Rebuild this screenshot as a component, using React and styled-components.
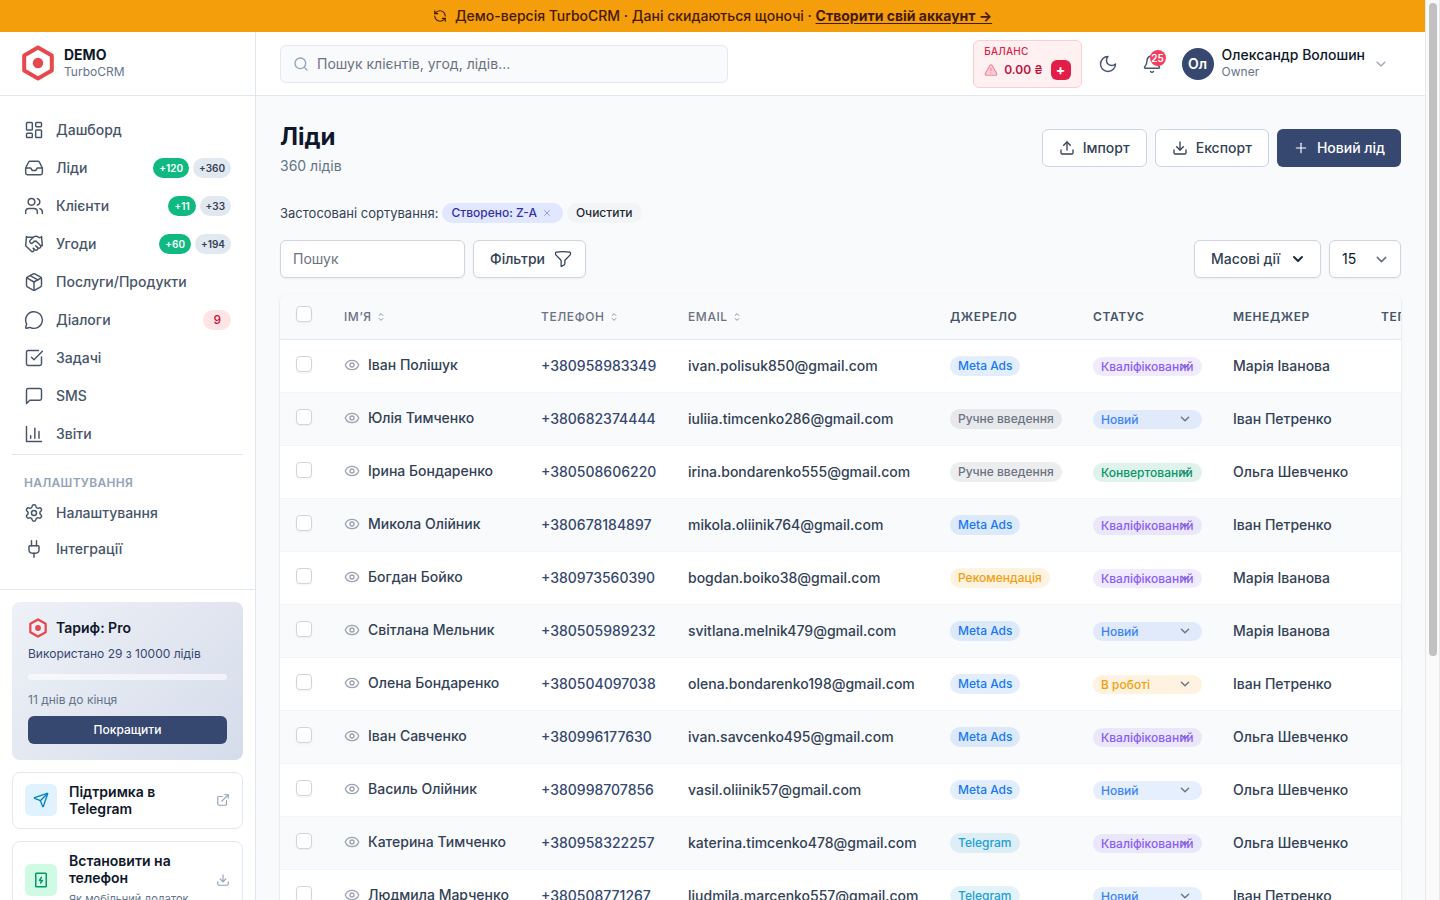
import React from 'react';
import styled, { createGlobalStyle } from 'styled-components';
import {
  LayoutDashboard,
  Inbox,
  Users,
  Handshake,
  Package,
  MessageCircle,
  SquareCheckBig,
  Settings,
  Plug,
  RefreshCcw,
  Search,
  TriangleAlert,
  Bell,
  ChevronDown,
  Upload,
  Download,
  Plus,
  Eye,
  Send,
  ExternalLink,
  X,
} from 'lucide-react';

const brand = '#364770';

const GlobalStyle = createGlobalStyle`
  *, *::before, *::after {
    box-sizing: border-box;
  }

  html {
    scrollbar-width: none;
  }

  body {
    margin: 0;
    background: #f8fafc;
    color: #0f172a;
    font-family: Inter, "Liberation Sans", sans-serif;
    font-size: 14px;
    line-height: 20px;
    -webkit-font-smoothing: antialiased;
  }

  button, input, select {
    font: inherit;
    color: inherit;
    margin: 0;
  }

  button {
    cursor: pointer;
  }

  a {
    color: inherit;
    text-decoration: none;
  }

  svg {
    flex-shrink: 0;
  }
`;

/* ---------- Page frame and scroll rail ---------- */

const Frame = styled.div`
  display: grid;
  grid-template-columns: minmax(0, 1fr) 15px;
`;

const Rail = styled.div`
  position: sticky;
  top: 0;
  align-self: start;
  height: 100vh;
  padding: 3px;
  border: solid #e8e8e8;
  border-width: 0 1px;
  background: #fafafa;
`;

const Thumb = styled.div`
  width: 8px;
  height: 73%;
  border-radius: 4px;
  background: #c1c1c1;
`;

/* ---------- Banner ---------- */

const Banner = styled.div`
  display: flex;
  align-items: center;
  justify-content: center;
  gap: 8px;
  height: 32px;
  background: #f59e0b;
  color: #451a03;
  font-weight: 500;

  a {
    font-weight: 700;
    text-decoration: underline;
    text-underline-offset: 2px;
  }
`;

/* ---------- Shell ---------- */

const Shell = styled.div`
  display: grid;
  grid-template-columns: 256px minmax(0, 1fr);
`;

const Sidebar = styled.aside`
  position: sticky;
  top: 0;
  align-self: start;
  height: calc(100vh - 32px);
  min-height: 320px;
  overflow: hidden;
  background: #fff;
  border-right: 1px solid #e2e8f0;
`;

const Brand = styled.a`
  display: flex;
  align-items: center;
  gap: 8px;
  height: 64px;
  padding: 0 20px 1px;
  border-bottom: 1px solid #e2e8f0;
`;

const BrandText = styled.span`
  display: flex;
  flex-direction: column;
  line-height: 18px;

  strong {
    font-weight: 700;
  }

  small {
    font-size: 12px;
    line-height: 16px;
    color: #64748b;
  }
`;

const Nav = styled.nav`
  display: flex;
  flex-direction: column;
  gap: ${(props) => (props.$compact ? '0' : '2px')};
  padding: ${(props) => (props.$compact ? '20px 0 0' : '16px 12px 22px')};
  border-top: ${(props) => (props.$compact ? '1px solid #e2e8f0' : '0')};
`;

const NavTitle = styled.h2`
  margin: 0 0 4px;
  padding: 0 12px;
  font-size: 12px;
  font-weight: 600;
  line-height: 16px;
  letter-spacing: 0.025em;
  text-transform: uppercase;
  color: #94a3b8;
`;

const NavItem = styled.a`
  display: flex;
  align-items: center;
  gap: 12px;
  height: 36px;
  padding: 0 12px;
  border-radius: 6px;
  font-weight: 500;
  color: #475569;

  &:hover {
    background: #f1f5f9;
  }
`;

const Badges = styled.span`
  display: flex;
  gap: 4px;
  margin-left: auto;
`;

const badgeTones = {
  green: ['#10b981', '#fff'],
  gray: ['#e2e8f0', '#334155'],
  red: ['#ffe4e6', '#be123c'],
};

const Badge = styled.span`
  padding: ${(props) => (props.$tone === 'red' ? '0 10px' : '0 6px')};
  border-radius: 10px;
  background: ${(props) => badgeTones[props.$tone][0]};
  color: ${(props) => badgeTones[props.$tone][1]};
  font-size: ${(props) => (props.$tone === 'red' ? '12px' : '10px')};
  font-weight: ${(props) => (props.$tone === 'red' ? 500 : 600)};
  line-height: 20px;
`;

const SidebarFooter = styled.div`
  display: flex;
  flex-direction: column;
  gap: 12px;
  padding: 12px;
  border-top: 1px solid #e2e8f0;
`;

const Plan = styled.section`
  padding: 16px;
  border-radius: 8px;
  background: linear-gradient(135deg, #eef1f7, #d5dcea);
  font-size: 12px;
  line-height: 16px;
  color: ${brand};

  p {
    margin: 8px 0 12px;
  }
`;

const PlanTitle = styled.h3`
  display: flex;
  align-items: center;
  gap: 8px;
  margin: 0;
  font-size: 14px;
  font-weight: 600;
  line-height: 20px;
  color: #0f172a;
`;

const PlanBar = styled.div`
  height: 6px;
  margin-bottom: 12px;
  border-radius: 3px;
  background: rgba(255, 255, 255, 0.6);
`;

const PlanNote = styled.div`
  color: #64748b;
`;

const PlanButton = styled.button`
  display: block;
  width: 100%;
  height: 28px;
  margin-top: 8px;
  padding: 0;
  border: 0;
  border-radius: 6px;
  background: ${brand};
  color: #fff;
  font-weight: 500;
`;

const LinkCard = styled.a`
  display: flex;
  align-items: center;
  gap: 12px;
  padding: 10px 12px 11px;
  border: 1px solid #e2e8f0;
  border-radius: 8px;
  color: #94a3b8;
`;

const LinkIcon = styled.span`
  display: flex;
  align-items: center;
  justify-content: center;
  flex-shrink: 0;
  width: 32px;
  height: 32px;
  border-radius: 6px;
  background: ${(props) => props.$bg};
  color: ${(props) => props.$color};
`;

const LinkText = styled.span`
  flex: 1;
  display: flex;
  flex-direction: column;
  gap: 5px;
  font-weight: 600;
  line-height: 17px;
  color: #0f172a;

  small {
    font-size: 11px;
    font-weight: 400;
    line-height: 16px;
    color: #64748b;
    white-space: nowrap;
  }
`;

/* ---------- Top bar ---------- */

const TopBar = styled.header`
  display: flex;
  align-items: center;
  height: 64px;
  padding: 0 24px;
  background: #fff;
  border-bottom: 1px solid #e2e8f0;
`;

const GlobalSearch = styled.label`
  display: flex;
  align-items: center;
  gap: 8px;
  flex: 0 1 448px;
  height: 38px;
  padding: 0 12px;
  border: 1px solid #e2e8f0;
  border-radius: 6px;
  background: #f8fafc;
  color: #94a3b8;

  input {
    flex: 1;
    min-width: 0;
    padding: 0;
    border: 0;
    outline: 0;
    background: none;
    color: #0f172a;
  }

  input::placeholder {
    color: #6b7280;
    opacity: 1;
  }
`;

const TopActions = styled.div`
  display: flex;
  align-items: center;
  gap: 8px;
  margin-left: auto;
`;

const Balance = styled.div`
  height: 48px;
  padding: 4px 10px;
  border: 1px solid #fecdd3;
  border-radius: 6px;
  background: #fff1f2;
  color: #e11d48;
  font-size: 10px;
  font-weight: 500;
  line-height: 12px;
  letter-spacing: 0.025em;
`;

const BalanceRow = styled.div`
  display: flex;
  align-items: center;
  gap: 6px;
  height: 27px;
  font-size: 12px;
  letter-spacing: normal;
  color: #be123c;

  svg {
    fill: #fecdd3;
    color: #f08a9f;
  }

  strong {
    margin-right: 2px;
    font-weight: 600;
  }
`;

const TopUp = styled.button`
  width: 20px;
  height: 20px;
  padding: 0;
  border: 0;
  border-radius: 6px;
  background: #e11d48;
  color: #fff;
  font-size: 14px;
  font-weight: 700;
  line-height: 20px;
`;

const IconButton = styled.button`
  position: relative;
  display: flex;
  align-items: center;
  justify-content: center;
  width: 36px;
  height: 36px;
  padding: 0;
  border: 0;
  border-radius: 6px;
  background: none;
  color: #475569;
`;

const Count = styled.span`
  position: absolute;
  top: 4px;
  right: 4px;
  min-width: 16px;
  height: 16px;
  border-radius: 8px;
  background: #f43f5e;
  color: #fff;
  font-size: 10px;
  font-weight: 600;
  line-height: 16px;
  text-align: center;
`;

const UserButton = styled.button`
  display: flex;
  align-items: center;
  gap: 8px;
  padding: 4px 12px 4px 4px;
  border: 0;
  background: none;
  color: #94a3b8;
  text-align: left;
`;

const Avatar = styled.span`
  width: 32px;
  height: 32px;
  border-radius: 50%;
  background: ${brand};
  color: #fff;
  font-weight: 600;
  line-height: 32px;
  text-align: center;
`;

const UserText = styled.span`
  display: flex;
  flex-direction: column;
  padding-bottom: 2px;
  font-weight: 500;
  line-height: 18px;
  color: #0f172a;

  small {
    font-size: 12px;
    font-weight: 400;
    line-height: 16px;
    color: #64748b;
  }
`;

/* ---------- Page ---------- */

const Content = styled.main`
  padding: 24px;
`;

const PageHead = styled.div`
  display: flex;
  align-items: center;
  justify-content: space-between;
  margin-bottom: 27px;

  h1 {
    margin: 0 0 2px;
    font-size: 24px;
    font-weight: 700;
    line-height: 34px;
  }

  p {
    margin: 0;
    color: #64748b;
  }
`;

const Group = styled.div`
  display: flex;
  gap: 8px;
`;

const Button = styled.button`
  display: flex;
  align-items: center;
  gap: 8px;
  height: 38px;
  padding: ${(props) => (props.$toolbar ? '0 12px 0 16px' : '0 16px')};
  border: ${(props) => (props.$primary ? '0' : props.$toolbar ? '1px solid #d1d5db' : '1px solid #cbd5e1')};
  border-radius: 6px;
  background: ${(props) => (props.$primary ? brand : '#fff')};
  color: ${(props) => (props.$primary ? '#fff' : '#334155')};
  font-weight: 500;
  box-shadow: ${(props) => (props.$toolbar ? '0 1px 2px rgba(0, 0, 0, 0.05)' : 'none')};
`;

const SortRow = styled.div`
  display: flex;
  align-items: center;
  gap: 4px;
  margin-bottom: 17px;
  font-size: 13px;
  color: #334155;
`;

const Pill = styled.span`
  display: flex;
  align-items: center;
  gap: 3px;
  height: 20px;
  padding: 0 9px;
  border: 0;
  border-radius: 10px;
  background: ${(props) => (props.$indigo ? '#e0e7ff' : '#f3f4f6')};
  color: ${(props) => (props.$indigo ? '#3730a3' : '#1f2937')};
  font-size: 12px;
  font-weight: 500;
  line-height: 16px;
`;

const PillRemove = styled.button`
  display: flex;
  padding: 2px;
  border: 0;
  background: none;
  color: #818cf8;
`;

const Toolbar = styled.div`
  display: flex;
  justify-content: space-between;
  margin-bottom: 16px;
`;

const SearchInput = styled.input`
  width: 185px;
  height: 38px;
  padding: 0 12px 1px;
  border: 1px solid #d1d5db;
  border-radius: 6px;
  background: #fff;
  box-shadow: 0 1px 2px rgba(0, 0, 0, 0.05);

  &::placeholder {
    color: #6b7280;
    opacity: 1;
  }
`;

const arrow =
  "url(\"data:image/svg+xml,%3csvg xmlns='http://www.w3.org/2000/svg' fill='none' viewBox='0 0 20 20'%3e%3cpath stroke='%236b7280' stroke-linecap='round' stroke-linejoin='round' stroke-width='1.5' d='M6 8l4 4 4-4'/%3e%3c/svg%3e\")";

const PageSize = styled.select`
  appearance: none;
  width: 72px;
  height: 38px;
  padding: 0 12px;
  border: 1px solid #d1d5db;
  border-radius: 6px;
  background: #fff ${arrow} right 8px center / 21px no-repeat;
  box-shadow: 0 1px 2px rgba(0, 0, 0, 0.05);
`;

const TableBox = styled.div`
  overflow: hidden;
  border-radius: 8px;
  background: #fff;
  box-shadow: 0 1px 3px rgba(0, 0, 0, 0.1), 0 1px 2px rgba(0, 0, 0, 0.06);
`;

const Table = styled.table`
  table-layout: fixed;
  width: 1280px;
  border-collapse: separate;
  border-spacing: 0;
  font-weight: 500;
  color: #334155;
  white-space: nowrap;

  th,
  td {
    padding: 0 16px;
    text-align: left;
  }

  th {
    height: 46px;
    border-bottom: 1px solid #e2e8f0;
    background: #f8fafc;
    font-size: 12px;
    font-weight: 600;
    line-height: 16px;
    letter-spacing: 0.05em;
    text-transform: uppercase;
    color: #475569;
  }

  td {
    height: 53px;
    border-bottom: 1px solid #f1f5f9;
  }

  tbody tr:nth-child(even) {
    background: #f8fafc;
  }
`;

const Col = styled.col`
  width: ${(props) => props.$w}px;
`;

const SortButton = styled.button`
  display: flex;
  align-items: center;
  gap: 3px;
  padding: 0;
  border: 0;
  background: none;
  color: #6b7280;
  font-weight: 500;
  letter-spacing: inherit;
  text-transform: inherit;
`;

const Check = styled.input`
  appearance: none;
  display: block;
  width: 16px;
  height: 16px;
  margin-bottom: 5px;
  border: 1px solid #d1d5db;
  border-radius: 4px;
  background: #fff;
  box-shadow: 0 1px 2px rgba(0, 0, 0, 0.05);

  &:checked {
    background: ${brand};
  }
`;

const Person = styled.a`
  display: flex;
  align-items: center;
  gap: 8px;
  padding-bottom: 2px;

  svg {
    color: #9ca3af;
  }
`;

const Phone = styled.a`
  color: ${brand};
`;

const Source = styled.span`
  display: block;
  width: fit-content;
  padding: 0 8px;
  border-radius: 10px;
  background: ${(props) => props.$color}20;
  color: ${(props) => props.$color};
  font-size: 12px;
  line-height: 20px;
`;

const Status = styled.select`
  appearance: none;
  display: block;
  height: 19px;
  padding: 0 8px;
  border: 0;
  border-radius: 10px;
  background: ${(props) => props.$color}20 ${arrow} right 8px center / 18px no-repeat;
  color: ${(props) => props.$color};
  font-size: 12px;
`;

const Pager = styled.div`
  display: flex;
  justify-content: space-between;
  align-items: center;
  padding-top: 16px;
  height: 54px;
  color: #334155;
`;

/* ---------- Icons ---------- */

const Line = ({ size = 20, width = 1.75, children }) => (
  <svg
    width={size}
    height={size}
    viewBox="0 0 24 24"
    fill="none"
    stroke="currentColor"
    strokeWidth={width}
    strokeLinecap="round"
    strokeLinejoin="round"
    aria-hidden="true"
  >
    {children}
  </svg>
);

const Logo = ({ size, stroke = 4 }) => (
  <svg width={size} height={size} viewBox="0 0 36 36" fill="none" aria-hidden="true">
    <path
      d="M18 2.6 31.8 10.4V25.6L18 33.4 4.2 25.6V10.4Z"
      stroke="#e5484d"
      strokeWidth={stroke}
      strokeLinejoin="round"
    />
    <circle cx="18" cy="18" r="5.2" fill="#e5484d" />
  </svg>
);

const SmsIcon = () => (
  <Line>
    <path d="M21 15a2 2 0 0 1-2 2H7l-4 4V5a2 2 0 0 1 2-2h14a2 2 0 0 1 2 2z" />
  </Line>
);

const ReportIcon = () => (
  <Line>
    <path d="M3 3v18h18M18 17V9M13 17V5M8 17v-3" />
  </Line>
);

const MoonIcon = () => (
  <Line>
    <path d="M12 3a6 6 0 0 0 9 9 9 9 0 1 1-9-9Z" />
  </Line>
);

const FunnelIcon = () => (
  <Line width={1.5}>
    <path d="M12 3c2.755 0 5.455.232 8.083.678.533.09.917.556.917 1.096v1.044a2.25 2.25 0 0 1-.659 1.591l-5.432 5.432a2.25 2.25 0 0 0-.659 1.591v2.927a2.25 2.25 0 0 1-1.244 2.013L9.75 21v-6.568a2.25 2.25 0 0 0-.659-1.591L3.659 7.409A2.25 2.25 0 0 1 3 5.818V4.774c0-.54.384-1.006.917-1.096A48.32 48.32 0 0 1 12 3Z" />
  </Line>
);

const SortIcon = () => (
  <Line size={12} width={1.5}>
    <path d="M8.25 15 12 18.75 15.75 15m-7.5-6L12 5.25 15.75 9" />
  </Line>
);

const CaretIcon = () => (
  <svg width="20" height="20" viewBox="0 0 20 20" fill="#1e293b" aria-hidden="true">
    <path d="M5.293 7.293a1 1 0 0 1 1.414 0L10 10.586l3.293-3.293a1 1 0 1 1 1.414 1.414l-4 4a1 1 0 0 1-1.414 0l-4-4a1 1 0 0 1 0-1.414z" />
  </svg>
);

const InstallIcon = () => (
  <Line size={18} width={2}>
    <rect x="5" y="3" width="14" height="18" rx="1" />
    <path d="M12.5 8.5 10 12.5h4L11.5 16" />
  </Line>
);

/* ---------- Data ---------- */

const menu = [
  { icon: LayoutDashboard, label: 'Дашборд' },
  { icon: Inbox, label: 'Ліди', badges: [['green', '+120'], ['gray', '+360']] },
  { icon: Users, label: 'Клієнти', badges: [['green', '+11'], ['gray', '+33']] },
  { icon: Handshake, label: 'Угоди', badges: [['green', '+60'], ['gray', '+194']] },
  { icon: Package, label: 'Послуги/Продукти' },
  { icon: MessageCircle, label: 'Діалоги', badges: [['red', '9']] },
  { icon: SquareCheckBig, label: 'Задачі' },
  { icon: SmsIcon, label: 'SMS' },
  { icon: ReportIcon, label: 'Звіти' },
];

const settingsMenu = [
  { icon: Settings, label: 'Налаштування' },
  { icon: Plug, label: 'Інтеграції' },
];

const sourceColors = {
  'Meta Ads': '#1877f2',
  'Ручне введення': '#6b7280',
  'Рекомендація': '#f59e0b',
  Telegram: '#229ed9',
};

const statusColors = {
  'Новий': '#3b82f6',
  'В роботі': '#f59e0b',
  'Кваліфікований': '#8b5cf6',
  'Конвертований': '#059669',
};

const leads = [
  ['Іван Полішук', '+380958983349', 'ivan.polisuk850@gmail.com', 'Meta Ads', 'Кваліфікований', 'Марія Іванова'],
  ['Юлія Тимченко', '+380682374444', 'iuliia.timcenko286@gmail.com', 'Ручне введення', 'Новий', 'Іван Петренко'],
  ['Ірина Бондаренко', '+380508606220', 'irina.bondarenko555@gmail.com', 'Ручне введення', 'Конвертований', 'Ольга Шевченко'],
  ['Микола Олійник', '+380678184897', 'mikola.oliinik764@gmail.com', 'Meta Ads', 'Кваліфікований', 'Іван Петренко'],
  ['Богдан Бойко', '+380973560390', 'bogdan.boiko38@gmail.com', 'Рекомендація', 'Кваліфікований', 'Марія Іванова'],
  ['Світлана Мельник', '+380505989232', 'svitlana.melnik479@gmail.com', 'Meta Ads', 'Новий', 'Марія Іванова'],
  ['Олена Бондаренко', '+380504097038', 'olena.bondarenko198@gmail.com', 'Meta Ads', 'В роботі', 'Іван Петренко'],
  ['Іван Савченко', '+380996177630', 'ivan.savcenko495@gmail.com', 'Meta Ads', 'Кваліфікований', 'Ольга Шевченко'],
  ['Василь Олійник', '+380998707856', 'vasil.oliinik57@gmail.com', 'Meta Ads', 'Новий', 'Ольга Шевченко'],
  ['Катерина Тимченко', '+380958322257', 'katerina.timcenko478@gmail.com', 'Telegram', 'Кваліфікований', 'Ольга Шевченко'],
  ['Людмила Марченко', '+380508771267', 'liudmila.marcenko557@gmail.com', 'Telegram', 'Новий', 'Іван Петренко'],
];

const MenuItem = ({ icon: Icon, label, badges }) => (
  <NavItem href="#">
    <Icon size={20} strokeWidth={1.75} />
    {label}
    {badges && (
      <Badges>
        {badges.map(([tone, text]) => (
          <Badge key={text} $tone={tone}>{text}</Badge>
        ))}
      </Badges>
    )}
  </NavItem>
);

const SortableTh = ({ children }) => (
  <th>
    <SortButton type="button">
      {children}
      <SortIcon />
    </SortButton>
  </th>
);

const LeadRow = ({ lead }) => {
  const [name, phone, email, source, status, manager] = lead;
  return (
    <tr>
      <td>
        <Check type="checkbox" aria-label={name} />
      </td>
      <td>
        <Person href="#">
          <Eye size={16} />
          {name}
        </Person>
      </td>
      <td>
        <Phone href={`tel:${phone}`}>{phone}</Phone>
      </td>
      <td>{email}</td>
      <td>
        <Source $color={sourceColors[source]}>{source}</Source>
      </td>
      <td>
        <Status $color={statusColors[status]} defaultValue={status} aria-label={`Статус: ${name}`}>
          {Object.keys(statusColors).map((item) => (
            <option key={item}>{item}</option>
          ))}
        </Status>
      </td>
      <td>{manager}</td>
      <td />
    </tr>
  );
};

const App = () => {
  return (
    <Frame>
      <GlobalStyle />
      <div>
        <Banner>
          <RefreshCcw size={14} />
          <span>
            Демо-версія TurboCRM · Дані скидаються щоночі · <a href="#">Створити свій аккаунт →</a>
          </span>
        </Banner>
        <Shell>
          <Sidebar>
            <Brand href="#">
              <Logo size={36} />
              <BrandText>
                <strong>DEMO</strong>
                <small>TurboCRM</small>
              </BrandText>
            </Brand>
            <Nav>
              {menu.map((item) => (
                <MenuItem key={item.label} {...item} />
              ))}
              <Nav as="div" $compact>
                <NavTitle>Налаштування</NavTitle>
                {settingsMenu.map((item) => (
                  <MenuItem key={item.label} {...item} />
                ))}
              </Nav>
            </Nav>
            <SidebarFooter>
              <Plan>
                <PlanTitle>
                  <Logo size={20} />
                  Тариф: Pro
                </PlanTitle>
                <p>Використано 29 з 10000 лідів</p>
                <PlanBar />
                <PlanNote>11 днів до кінця</PlanNote>
                <PlanButton type="button">Покращити</PlanButton>
              </Plan>
              <LinkCard href="#">
                <LinkIcon $bg="#e0f2fe" $color="#0284c7">
                  <Send size={16} />
                </LinkIcon>
                <LinkText>Підтримка в Telegram</LinkText>
                <ExternalLink size={14} />
              </LinkCard>
              <LinkCard href="#">
                <LinkIcon $bg="#d1fae5" $color="#059669">
                  <InstallIcon />
                </LinkIcon>
                <LinkText>
                  Встановити на телефон
                  <small>Як мобільний додаток</small>
                </LinkText>
                <Download size={14} />
              </LinkCard>
            </SidebarFooter>
          </Sidebar>

          <div>
            <TopBar>
              <GlobalSearch>
                <Search size={16} />
                <input type="text" placeholder="Пошук клієнтів, угод, лідів..." aria-label="Пошук" />
              </GlobalSearch>
              <TopActions>
                <Balance>
                  БАЛАНС
                  <BalanceRow>
                    <TriangleAlert size={14} />
                    <strong>0.00 ₴</strong>
                    <TopUp type="button">+</TopUp>
                  </BalanceRow>
                </Balance>
                <IconButton type="button" aria-label="Темна тема">
                  <MoonIcon />
                </IconButton>
                <IconButton type="button" aria-label="Сповіщення">
                  <Bell size={20} strokeWidth={1.75} />
                  <Count>25</Count>
                </IconButton>
                <UserButton type="button">
                  <Avatar>Ол</Avatar>
                  <UserText>
                    Олександр Волошин
                    <small>Owner</small>
                  </UserText>
                  <ChevronDown size={16} strokeWidth={1.75} />
                </UserButton>
              </TopActions>
            </TopBar>

            <Content>
              <PageHead>
                <div>
                  <h1>Ліди</h1>
                  <p>360 лідів</p>
                </div>
                <Group>
                  <Button type="button">
                    <Upload size={16} />
                    Імпорт
                  </Button>
                  <Button type="button">
                    <Download size={16} />
                    Експорт
                  </Button>
                  <Button type="button" $primary>
                    <Plus size={16} strokeWidth={1.75} />
                    Новий лід
                  </Button>
                </Group>
              </PageHead>

              <SortRow>
                <span>Застосовані сортування:</span>
                <Pill $indigo>
                  Створено: Z-A
                  <PillRemove type="button" aria-label="Прибрати сортування">
                    <X size={10} />
                  </PillRemove>
                </Pill>
                <Pill as="button" type="button">Очистити</Pill>
              </SortRow>

              <Toolbar>
                <Group>
                  <SearchInput type="text" placeholder="Пошук" aria-label="Пошук лідів" />
                  <Button type="button" $toolbar>
                    Фільтри
                    <FunnelIcon />
                  </Button>
                </Group>
                <Group>
                  <Button type="button" $toolbar>
                    Масові дії
                    <CaretIcon />
                  </Button>
                  <PageSize defaultValue="15" aria-label="Рядків на сторінці">
                    <option>15</option>
                    <option>25</option>
                    <option>50</option>
                  </PageSize>
                </Group>
              </Toolbar>

              <TableBox>
                <Table>
                  <colgroup>
                    <Col $w={48} />
                    <Col $w={197} />
                    <Col $w={147} />
                    <Col $w={262} />
                    <Col $w={143} />
                    <Col $w={140} />
                    <Col $w={148} />
                    <col />
                  </colgroup>
                  <thead>
                    <tr>
                      <th>
                        <Check type="checkbox" aria-label="Вибрати всі" />
                      </th>
                      <SortableTh>Ім’я</SortableTh>
                      <SortableTh>Телефон</SortableTh>
                      <SortableTh>Email</SortableTh>
                      <th>Джерело</th>
                      <th>Статус</th>
                      <th>Менеджер</th>
                      <th>Теги</th>
                    </tr>
                  </thead>
                  <tbody>
                    {leads.map((lead) => (
                      <LeadRow key={lead[1]} lead={lead} />
                    ))}
                  </tbody>
                </Table>
              </TableBox>
              <Pager>
                <span>360 лідів</span>
              </Pager>
            </Content>
          </div>
        </Shell>
      </div>
      <Rail>
        <Thumb />
      </Rail>
    </Frame>
  );
};

export default App;
